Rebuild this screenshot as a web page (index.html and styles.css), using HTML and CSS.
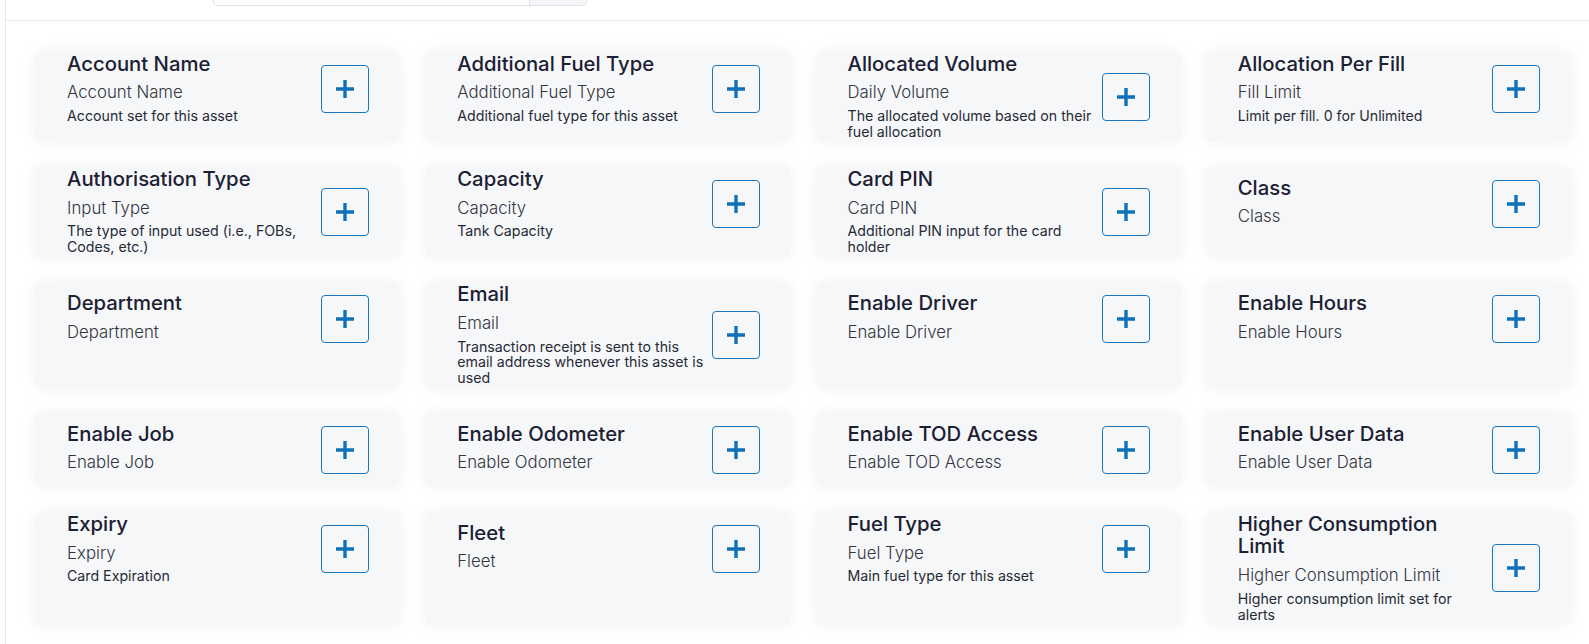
FILE: index.html
```html
<!DOCTYPE html>
<html lang="en">
<head>
<meta charset="utf-8">
<title>Asset fields</title>
<link rel="stylesheet" href="styles.css">
</head>
<body>
<div class="page">
  <div class="topbar">
    <div class="search">
      <div class="search-input"></div>
      <div class="search-addon"></div>
    </div>
  </div>
  <div class="fields">
    <div class="card"><div class="card-row"><div class="info"><h5 class="title">Account Name</h5><div class="sub">Account Name</div><div class="desc">Account set for this asset</div></div><div class="btn-wrap"><button class="add"><svg viewBox="0 0 18 18"><path d="M9 0V18M0 9H18"/></svg></button></div></div></div>
    <div class="card"><div class="card-row"><div class="info"><h5 class="title">Additional Fuel Type</h5><div class="sub">Additional Fuel Type</div><div class="desc">Additional fuel type for this asset</div></div><div class="btn-wrap"><button class="add"><svg viewBox="0 0 18 18"><path d="M9 0V18M0 9H18"/></svg></button></div></div></div>
    <div class="card"><div class="card-row"><div class="info"><h5 class="title">Allocated Volume</h5><div class="sub">Daily Volume</div><div class="desc">The allocated volume based on their fuel allocation</div></div><div class="btn-wrap"><button class="add"><svg viewBox="0 0 18 18"><path d="M9 0V18M0 9H18"/></svg></button></div></div></div>
    <div class="card"><div class="card-row"><div class="info"><h5 class="title">Allocation Per Fill</h5><div class="sub">Fill Limit</div><div class="desc">Limit per fill. 0 for Unlimited</div></div><div class="btn-wrap"><button class="add"><svg viewBox="0 0 18 18"><path d="M9 0V18M0 9H18"/></svg></button></div></div></div>

    <div class="card"><div class="card-row"><div class="info"><h5 class="title">Authorisation Type</h5><div class="sub">Input Type</div><div class="desc">The type of input used (i.e., FOBs, Codes, etc.)</div></div><div class="btn-wrap"><button class="add"><svg viewBox="0 0 18 18"><path d="M9 0V18M0 9H18"/></svg></button></div></div></div>
    <div class="card"><div class="card-row"><div class="info"><h5 class="title">Capacity</h5><div class="sub">Capacity</div><div class="desc">Tank Capacity</div></div><div class="btn-wrap"><button class="add"><svg viewBox="0 0 18 18"><path d="M9 0V18M0 9H18"/></svg></button></div></div></div>
    <div class="card"><div class="card-row"><div class="info"><h5 class="title">Card PIN</h5><div class="sub">Card PIN</div><div class="desc">Additional PIN input for the card holder</div></div><div class="btn-wrap"><button class="add"><svg viewBox="0 0 18 18"><path d="M9 0V18M0 9H18"/></svg></button></div></div></div>
    <div class="card"><div class="card-row"><div class="info"><h5 class="title">Class</h5><div class="sub">Class</div></div><div class="btn-wrap"><button class="add"><svg viewBox="0 0 18 18"><path d="M9 0V18M0 9H18"/></svg></button></div></div></div>

    <div class="card"><div class="card-row"><div class="info"><h5 class="title">Department</h5><div class="sub">Department</div></div><div class="btn-wrap"><button class="add"><svg viewBox="0 0 18 18"><path d="M9 0V18M0 9H18"/></svg></button></div></div></div>
    <div class="card"><div class="card-row"><div class="info"><h5 class="title">Email</h5><div class="sub">Email</div><div class="desc">Transaction receipt is sent to this email address whenever this asset is used</div></div><div class="btn-wrap"><button class="add"><svg viewBox="0 0 18 18"><path d="M9 0V18M0 9H18"/></svg></button></div></div></div>
    <div class="card"><div class="card-row"><div class="info"><h5 class="title">Enable Driver</h5><div class="sub">Enable Driver</div></div><div class="btn-wrap"><button class="add"><svg viewBox="0 0 18 18"><path d="M9 0V18M0 9H18"/></svg></button></div></div></div>
    <div class="card"><div class="card-row"><div class="info"><h5 class="title">Enable Hours</h5><div class="sub">Enable Hours</div></div><div class="btn-wrap"><button class="add"><svg viewBox="0 0 18 18"><path d="M9 0V18M0 9H18"/></svg></button></div></div></div>

    <div class="card"><div class="card-row"><div class="info"><h5 class="title">Enable Job</h5><div class="sub">Enable Job</div></div><div class="btn-wrap"><button class="add"><svg viewBox="0 0 18 18"><path d="M9 0V18M0 9H18"/></svg></button></div></div></div>
    <div class="card"><div class="card-row"><div class="info"><h5 class="title">Enable Odometer</h5><div class="sub">Enable Odometer</div></div><div class="btn-wrap"><button class="add"><svg viewBox="0 0 18 18"><path d="M9 0V18M0 9H18"/></svg></button></div></div></div>
    <div class="card"><div class="card-row"><div class="info"><h5 class="title">Enable TOD Access</h5><div class="sub">Enable TOD Access</div></div><div class="btn-wrap"><button class="add"><svg viewBox="0 0 18 18"><path d="M9 0V18M0 9H18"/></svg></button></div></div></div>
    <div class="card"><div class="card-row"><div class="info"><h5 class="title">Enable User Data</h5><div class="sub">Enable User Data</div></div><div class="btn-wrap"><button class="add"><svg viewBox="0 0 18 18"><path d="M9 0V18M0 9H18"/></svg></button></div></div></div>

    <div class="card"><div class="card-row"><div class="info"><h5 class="title">Expiry</h5><div class="sub">Expiry</div><div class="desc">Card Expiration</div></div><div class="btn-wrap"><button class="add"><svg viewBox="0 0 18 18"><path d="M9 0V18M0 9H18"/></svg></button></div></div></div>
    <div class="card"><div class="card-row"><div class="info"><h5 class="title">Fleet</h5><div class="sub">Fleet</div></div><div class="btn-wrap"><button class="add"><svg viewBox="0 0 18 18"><path d="M9 0V18M0 9H18"/></svg></button></div></div></div>
    <div class="card"><div class="card-row"><div class="info"><h5 class="title">Fuel Type</h5><div class="sub">Fuel Type</div><div class="desc">Main fuel type for this asset</div></div><div class="btn-wrap"><button class="add"><svg viewBox="0 0 18 18"><path d="M9 0V18M0 9H18"/></svg></button></div></div></div>
    <div class="card"><div class="card-row"><div class="info"><h5 class="title">Higher Consumption Limit</h5><div class="sub">Higher Consumption Limit</div><div class="desc">Higher consumption limit set for alerts</div></div><div class="btn-wrap"><button class="add"><svg viewBox="0 0 18 18"><path d="M9 0V18M0 9H18"/></svg></button></div></div></div>
  </div>
</div>
</body>
</html>
```
FILE: styles.css
```css
html, body {
  margin: 0;
  padding: 0;
  background: #ffffff;
  overflow: hidden;
}
body {
  font-family: "Inter", "Open Sans", "DejaVu Sans", sans-serif;
  color: #1c2033;
}
.page {
  margin-left: 5px;
  border-left: 1px solid #e6e7ee;
  min-height: 644px;
}
.topbar {
  height: 20px;
  border-bottom: 1px solid #e6e7ee;
}
.search {
  margin-left: 207px;
  width: 374px;
  height: 6px;
  display: flex;
  border: 1px solid #dfe2e8;
  border-top: none;
  border-radius: 0 0 5px 5px;
  overflow: hidden;
  box-sizing: border-box;
}
.search-input {
  flex: 1;
  background: #ffffff;
}
.search-addon {
  width: 56px;
  border-left: 1px solid #dfe2e8;
  background: #f5f6f8;
}
.fields {
  display: grid;
  grid-template-columns: repeat(4, 1fr);
  gap: 25px;
  padding: 31px 18px 0 29px;
}
.card {
  background: #f6f7f9;
  border-radius: 6px;
  box-shadow: 0 0 18px rgba(30, 40, 70, 0.055);
  padding: 0 31px 0 32px;
}
.card-row {
  display: flex;
  align-items: center;
}
.info {
  flex: 1;
  min-width: 0;
}
.title {
  margin: 0;
  padding-top: 0.6px;
  padding-right: 12px;
  font-size: 20.3px;
  line-height: 22.7px;
  font-weight: 500;
  color: #1c2033;
}
.sub {
  margin-top: 5.2px;
  margin-bottom: 3.84px;
  font-size: 16.8px;
  line-height: 24px;
  font-weight: 300;
  color: #33363f;
}
.desc {
  margin-bottom: 2.66px;
  font-size: 14.2px;
  line-height: 15.6px;
  font-weight: 400;
  color: #262a36;
}
.btn-wrap {
  height: 74px;
  display: flex;
  align-items: center;
  flex: none;
}
.add {
  width: 48px;
  height: 48px;
  padding: 0;
  border: 1px solid #1a77bd;
  border-radius: 4px;
  background: transparent;
  display: flex;
  align-items: center;
  justify-content: center;
  cursor: pointer;
}
.add svg {
  width: 18px;
  height: 18px;
  display: block;
}
.add path {
  stroke: #0f72b9;
  stroke-width: 3.4;
  fill: none;
}
```
